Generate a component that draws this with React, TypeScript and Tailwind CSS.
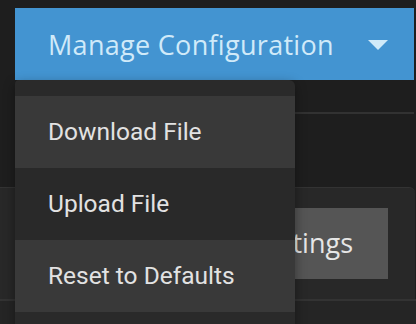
import { useState } from "react"

const menuItems = ["Download File", "Upload File", "Reset to Defaults"]

export default function App() {
  const [hovered, setHovered] = useState<number>(0)

  return (
    <div className="relative h-[324px] w-[416px] overflow-hidden bg-[#1e1e1e]">
      <div className="pl-[15px] pr-[2px] pt-2">
        <div className="relative">
          <button className="flex h-[72px] w-full items-center justify-between bg-[#4394d1] pl-[33px] pr-[26px] text-[#d0eaf9]">
            <span className="font-['Open_Sans',sans-serif] text-[27px] leading-none tracking-[0.3px]">
              Manage Configuration
            </span>
            <svg width="20" height="10" viewBox="0 0 20 10" className="mt-[1px]">
              <path d="M0 0 L20 0 L10 10 Z" fill="#d0eaf9" />
            </svg>
          </button>

          {/* dropdown */}
          <div className="absolute left-0 top-full z-10 h-[260px] w-[280px] rounded-tr-md rounded-tl-sm bg-[#2a2a2a] pt-4 shadow-[0_4px_12px_rgba(0,0,0,0.4)]">
            {menuItems.map((item, i) => (
              <div
                key={item}
                onMouseEnter={() => setHovered(i)}
                className={
                  "flex h-[72px] items-center pl-[33px] font-['Roboto',sans-serif] text-[24.5px] text-[#e2e2e2] " +
                  (i === hovered || i === 2 ? "bg-[#393939]" : "bg-[#292929]")
                }
              >
                {item}
              </div>
            ))}
          </div>
        </div>
        <div className="mt-[32px] h-[2px] bg-[#323232]" />
      </div>

      <div className="mt-[73px] mr-[1px] h-[112px] rounded-tr-md border-t border-[#333] bg-[#282828]">
        <div className="flex justify-end pr-[27px] pt-[20px]">
          <button className="flex h-[71px] items-center bg-[#555] pl-[34px] pr-[35px] font-['Open_Sans',sans-serif] text-[27px] text-[#e6e6e6]">
            Save Settings
          </button>
        </div>
      </div>
      <div className="h-[2px] bg-[#333]" />
      <div className="h-full bg-[#252525]" />
    </div>
  )
}
